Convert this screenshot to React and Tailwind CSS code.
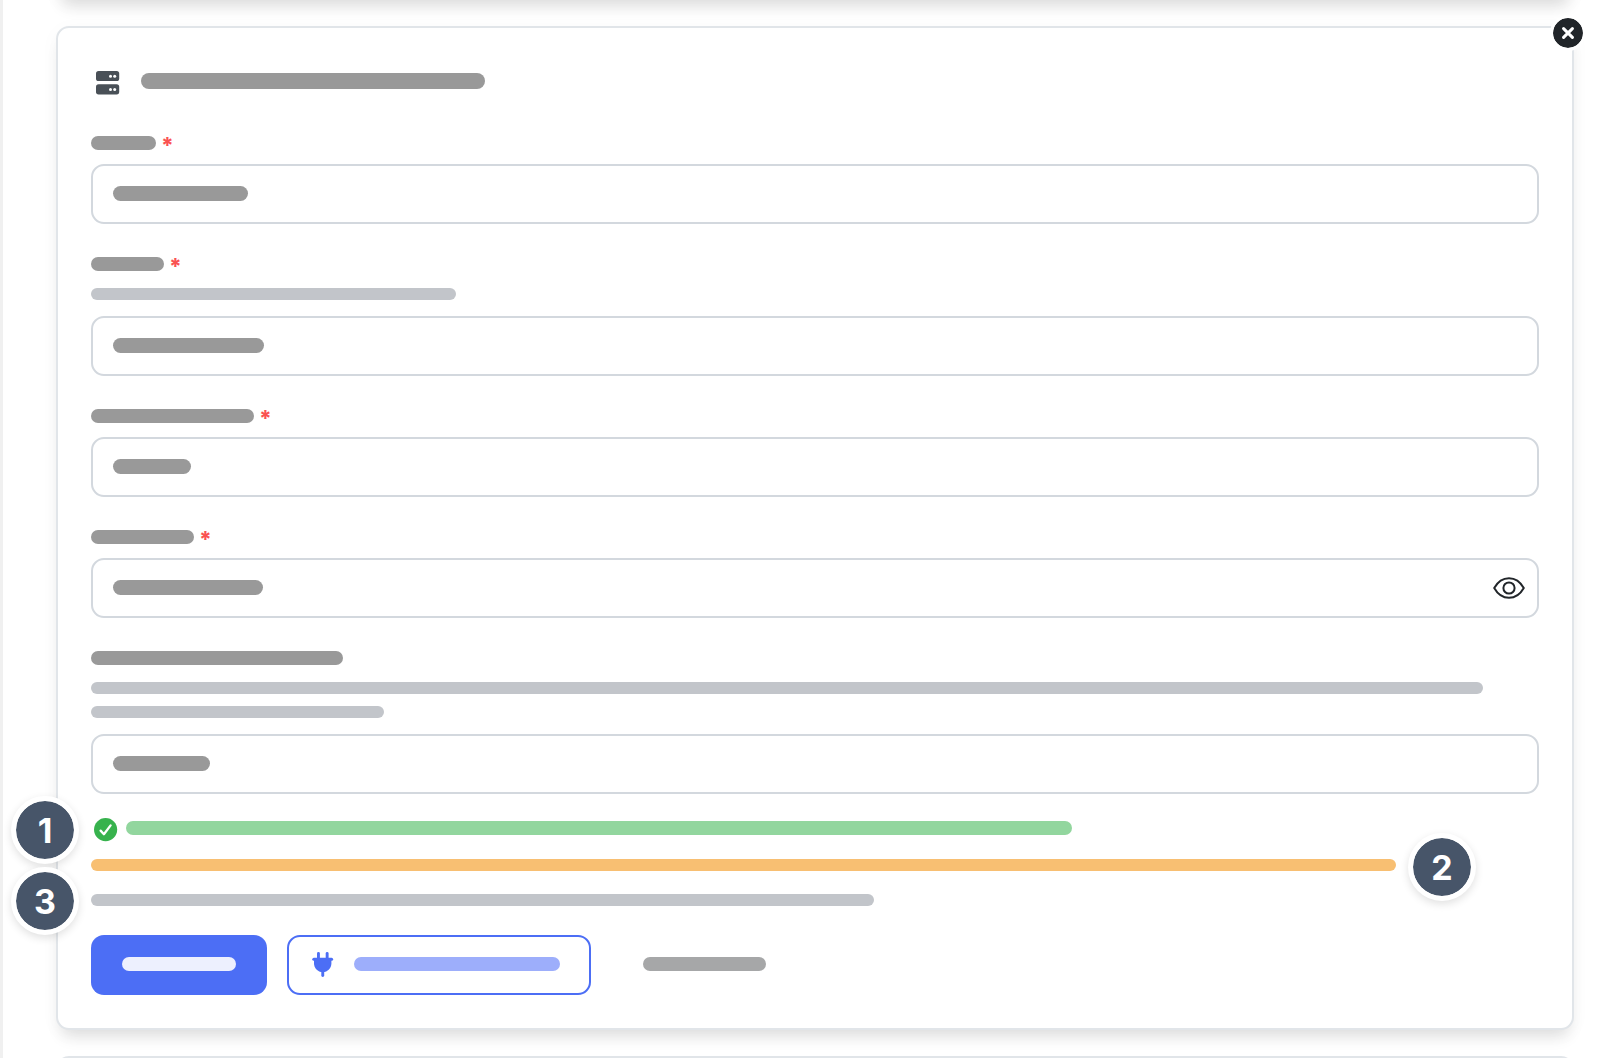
import React from 'react'
import clsx from 'clsx'

const cardStyle =
  'rounded-[13px] border-2 border-[#e1e5e9] bg-white shadow-[0_4px_20px_rgba(0,0,0,0.03),0_12px_16px_-6px_rgba(0,0,0,0.12)]'

const Bar = ({ className }) => <span className={clsx('block shrink rounded-full', className)} />

const ServerIcon = () => (
  <svg className="h-6 w-6 shrink-0" viewBox="0 0 24 24" aria-hidden="true">
    <rect x="0" y="0" width="23.2" height="10" rx="2.6" fill="#495057" />
    <rect x="0" y="13.2" width="23.2" height="10.2" rx="2.6" fill="#495057" />
    <g fill="#fff">
      <circle cx="14.5" cy="5.3" r="1.5" />
      <circle cx="18.7" cy="5.3" r="1.5" />
      <circle cx="14.5" cy="18.4" r="1.5" />
      <circle cx="18.7" cy="18.4" r="1.5" />
    </g>
  </svg>
)

const EyeIcon = () => (
  <svg className="h-[22px] w-8" viewBox="0 0 32 22" fill="none" stroke="#212529" strokeWidth="2" strokeLinejoin="round" aria-hidden="true">
    <path d="M1.2 11C4.6 5 10 1.2 16 1.2S27.4 5 30.8 11C27.4 17 22 20.8 16 20.8S4.6 17 1.2 11Z" />
    <circle cx="16" cy="11" r="5.6" />
  </svg>
)

const PlugIcon = () => (
  <svg className="h-[26px] w-[22px] shrink-0" viewBox="0 0 22 26" fill="#4c6ef5" aria-hidden="true">
    <rect x="5" y="1" width="2.9" height="8" rx="1.4" />
    <rect x="13.7" y="1" width="2.9" height="8" rx="1.4" />
    <rect x="0.3" y="6.800" width="20.8" height="3" rx="1.5" />
    <path d="M2 8.200H19.4V12.200C19.4 17.300 15.700 21 10.700 21S2 17.300 2 12.200Z" />
    <rect x="9.300" y="18.300" width="2.900" height="7.600" rx="1.400" />
  </svg>
)

const CheckIcon = () => (
  <svg className="h-6 w-6 shrink-0" viewBox="0 0 24 24" aria-hidden="true">
    <circle cx="11.6" cy="11.6" r="11.6" fill="#37b24d" />
    <path d="M6.6 12.6 9.9 16.2 16.6 7.4" fill="none" stroke="#fff" strokeWidth="2.3" strokeLinecap="round" strokeLinejoin="round" />
  </svg>
)

const Field = ({ id, name, labelWidth, valueWidth, required, help, type = 'text', children }) => (
  <div>
    <label htmlFor={id} aria-label={name} className="flex h-3.5 items-start gap-[5px]">
      <Bar className={clsx('h-3.5 bg-[#999999]', labelWidth)} />
      {required && <span className="text-[22px] leading-[18px] font-extrabold text-[#fa5252]">*</span>}
    </label>
    {help ? (
      <div className="mt-[17px] mb-4 flex flex-col gap-3">
        {help.map((width) => (
          <Bar key={width} className={clsx('h-3 bg-[#c2c5ca]', width)} />
        ))}
      </div>
    ) : (
      <div className="h-3.5" />
    )}
    <div className="flex h-[60px] items-center rounded-[13px] border-2 border-[#d3d8de] pr-3 pb-px pl-5">
      <Bar className={clsx('h-[15px] bg-[#999999]', valueWidth)} />
      <input id={id} type={type} aria-label={name} className="h-full min-w-0 flex-1 bg-transparent outline-none" />
      {children}
    </div>
  </div>
)

const Callout = ({ number, className }) => (
  <div
    className={clsx(
      'absolute flex h-[68px] w-[68px] items-center justify-center rounded-full border-5 border-white bg-[#475569] bg-clip-padding pt-0.5 text-[34px] leading-none font-bold text-white shadow-[0_3px_8px_rgba(0,0,0,0.12)]',
      className
    )}
  >
    {number}
  </div>
)

const App = () => {
  return (
    <main className="min-h-screen overflow-hidden border-l-3 border-[#f0f0f0] bg-white pr-[26px] pl-[53px] font-['Inter',sans-serif]">
      <div className={clsx('-mt-10 h-10', cardStyle)} />

      <section className={clsx('relative mt-[26px] px-[33px] pt-[43px] pb-[33px]', cardStyle)}>
        <button
          type="button"
          aria-label="Close"
          className="absolute -top-[13px] -right-[14px] flex h-9 w-9 items-center justify-center rounded-full border-3 border-white bg-[#212529] bg-clip-padding"
        >
          <svg className="h-3 w-3" viewBox="0 0 12 12" stroke="#fff" strokeWidth="3" strokeLinecap="round" aria-hidden="true">
            <path d="M1.6 1.6 10.4 10.4M10.4 1.6 1.6 10.4" />
          </svg>
        </button>

        <form onSubmit={(e) => e.preventDefault()}>
          <div className="mb-[41px] flex h-6 items-start gap-[21px] pl-[5px]">
            <ServerIcon />
            <Bar className="mt-0.5 h-4 w-[344px] bg-[#999999]" />
          </div>

          <div className="flex flex-col gap-[33px]">
            <Field id="name" name="Name" labelWidth="w-[65px]" valueWidth="w-[135px]" required />
            <Field id="server" name="Server" labelWidth="w-[73px]" valueWidth="w-[151px]" required help={['w-[365px]']} />
            <Field id="username" name="Username" labelWidth="w-[163px]" valueWidth="w-[78px]" required />
            <Field id="password" name="Password" labelWidth="w-[103px]" valueWidth="w-[150px]" type="password" required>
              <button type="button" aria-label="Show password">
                <EyeIcon />
              </button>
            </Field>
            <Field
              id="options"
              name="Options"
              labelWidth="w-[252px]"
              valueWidth="w-[97px]"
              help={['w-[1392px]', 'w-[293px]']}
            />
          </div>

          <div className="relative mt-6">
            <div className="flex h-6 items-center gap-2 pl-[3px]">
              <CheckIcon />
              <Bar className="mb-1 h-3.5 w-[946px] bg-[#92d69e]" />
            </div>
            <Bar className="mt-[17px] h-3 w-[1305px] bg-[#f8bf72]" />
            <Bar className="mt-[23px] h-3 w-[783px] bg-[#c2c5ca]" />
            <Callout number="1" className="-top-[22px] -left-[80px]" />
            <Callout number="3" className="top-[49px] -left-[80px]" />
            <Callout number="2" className="top-[15px] left-[1317px]" />
          </div>

          <div className="mt-[29px] flex items-center">
            <button type="submit" aria-label="Save" className="flex h-[60px] items-center rounded-[13px] bg-[#4c6ef5] px-[31px] pb-0.5">
              <Bar className="h-3.5 w-[114px] bg-[#edf0fe]" />
            </button>
            <button
              type="button"
              aria-label="Test connection"
              className="ml-5 flex h-[60px] items-center gap-5 rounded-[13px] border-2 border-[#4c6ef5] pr-[29px] pb-0.5 pl-[23px]"
            >
              <PlugIcon />
              <Bar className="h-3.5 w-[206px] bg-[#9daefb]" />
            </button>
            <button type="button" aria-label="Cancel" className="ml-5 flex h-[60px] items-center px-8 pb-0.5">
              <Bar className="h-3.5 w-[123px] bg-[#a6a7a8]" />
            </button>
          </div>
        </form>
      </section>

      <div className="relative mt-[26px] h-0.5 overflow-hidden">
        <div className="h-10 rounded-[13px] border-2 border-[#e1e5e9] bg-white" />
      </div>
    </main>
  )
}

export default App
